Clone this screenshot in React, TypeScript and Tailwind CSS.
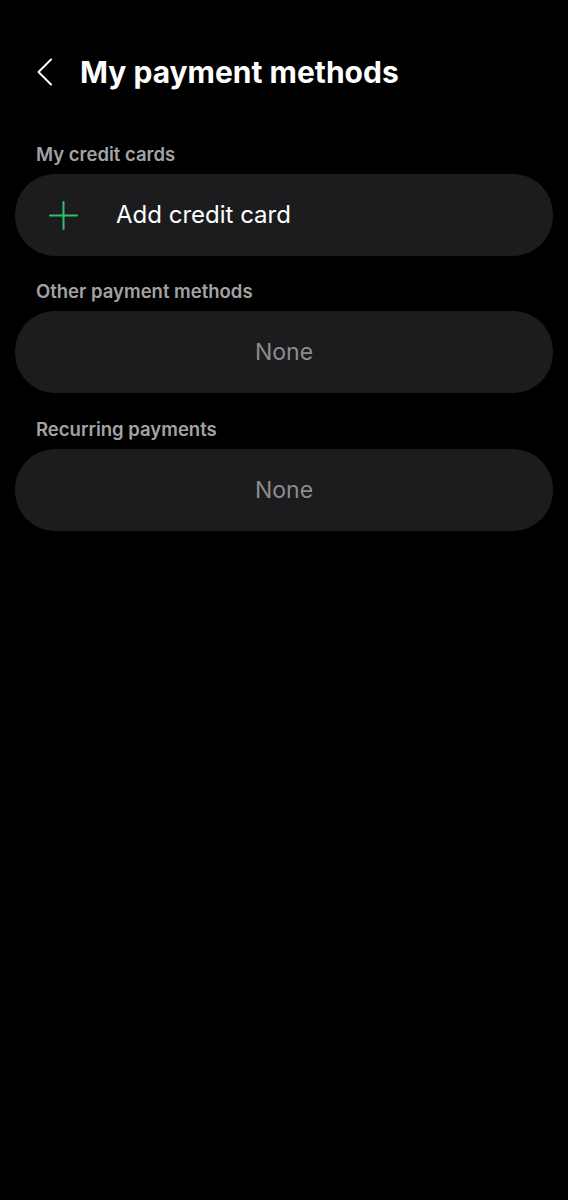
import { ReactNode } from "react";

function Label({ children }: { children: ReactNode }) {
  return (
    <div className="px-[36px] h-[24px] leading-[24px] text-[18.5px] font-semibold text-[#a3a3a5] mb-[8px]">
      {children}
    </div>
  );
}

function Card({ children, center }: { children: ReactNode; center?: boolean }) {
  return (
    <div
      className={`mx-[15px] h-[82px] rounded-[40px] bg-[#1c1c1e] flex items-center ${
        center ? "justify-center" : ""
      }`}
    >
      {children}
    </div>
  );
}

export default function App() {
  return (
    <div
      className="w-[568px] h-[1200px] bg-black text-white"
      style={{ fontFamily: "Inter, 'Noto Sans', sans-serif" }}
    >
      {/* header */}
      <div className="pt-[52px] h-[92px] flex items-center">
        <div className="w-[80px] flex items-center pl-[36px]">
          <svg width="18" height="28" viewBox="0 0 18 28" fill="none">
            <path d="M15 1.5 L2.5 14 L15 26.5" stroke="#fff" strokeWidth="2" strokeLinecap="round" strokeLinejoin="round" />
          </svg>
        </div>
        <h1 className="text-[30px] font-bold leading-[40px]">My payment methods</h1>
      </div>

      <div className="mt-[50px]">
        <Label>My credit cards</Label>
        <Card>
          <div className="flex pl-[34px] pr-[38px]">
            <svg width="29" height="29" viewBox="0 0 29 29" fill="none">
              <path d="M14.5 1 V28 M1 14.5 H28" stroke="#2fbf6e" strokeWidth="2" strokeLinecap="round" />
            </svg>
          </div>
          <span className="text-[24px] leading-[32px] text-white">Add credit card</span>
        </Card>
      </div>

      <div className="mt-[23px]">
        <Label>Other payment methods</Label>
        <Card center>
          <span className="text-[23px] leading-[32px] text-[#8c8c8e]">None</span>
        </Card>
      </div>

      <div className="mt-[24px]">
        <Label>Recurring payments</Label>
        <Card center>
          <span className="text-[23px] leading-[32px] text-[#8c8c8e]">None</span>
        </Card>
      </div>
    </div>
  );
}
